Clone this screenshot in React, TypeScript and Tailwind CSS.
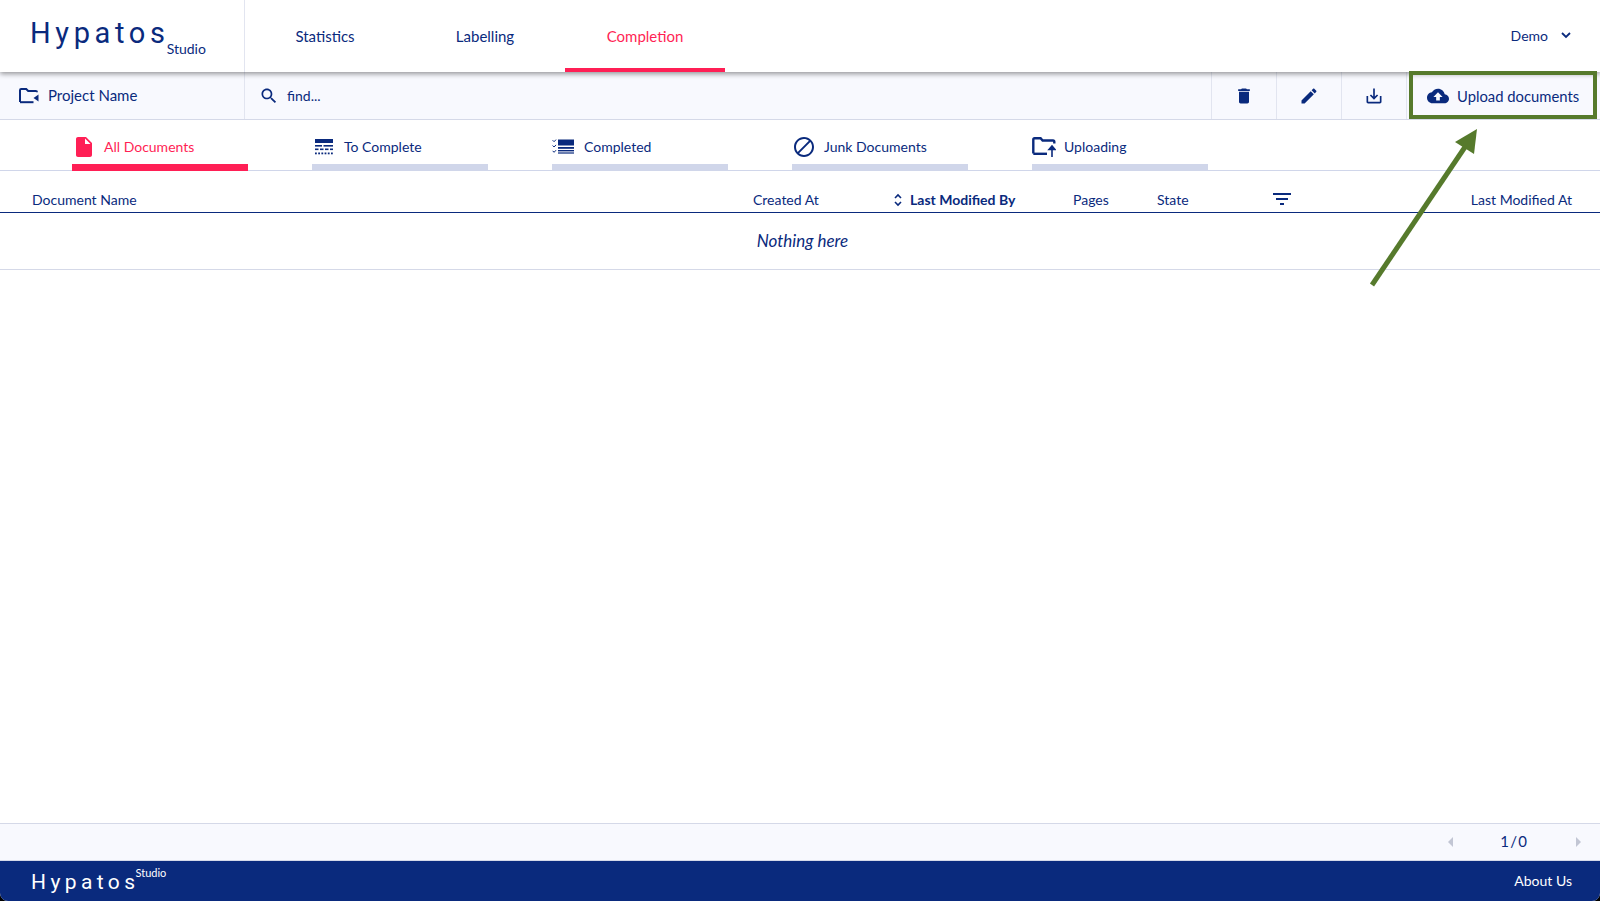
import type { ReactNode } from "react";

const NAVY = "#0a2a7d";

function MatIcon({ d, className }: { d: string; className: string }) {
  return (
    <svg viewBox="0 0 24 24" fill="currentColor" className={className}>
      <path d={d} />
    </svg>
  );
}

function ProjectFolderIcon() {
  return (
    <svg viewBox="0 0 20 16" className="w-[20px] h-[16px]" fill="none">
      <path d="M1 14V2.200C1 1.500 1.500 1 2.200 1h5l2 2h7.600c.7 0 1.200.5 1.200 1.200" stroke={NAVY} strokeWidth="2" />
      <path d="M1 14.200h13.500" stroke={NAVY} strokeWidth="2" />
      <path d="M19.500 6.500v7l-5-3.500z" fill={NAVY} />
    </svg>
  );
}

function UploadFolderIcon() {
  return (
    <svg viewBox="0 0 24 20" className="w-[24px] h-[20px]" fill="none">
      <path d="M1.300 16.500V2.500c0-.8.5-1.300 1.300-1.300h6l2 2.300h10.400c.8 0 1.300.5 1.300 1.300v1.700" stroke={NAVY} strokeWidth="2.400" />
      <path d="M1.300 16.800H15" stroke={NAVY} strokeWidth="2.400" />
      <path d="M20 20v-8M17 12.500l3-3.500 3 3.500z" stroke={NAVY} strokeWidth="1.600" fill={NAVY} />
    </svg>
  );
}

function ToCompleteIcon() {
  return (
    <svg viewBox="0 0 18 16" className="w-[18px] h-[16px]" fill={NAVY}>
      <rect x="0" y="0" width="18" height="4" />
      <rect x="0" y="6" width="7" height="1.600" />
      <rect x="8.500" y="6" width="9.500" height="1.600" />
      <rect x="0" y="9.500" width="3.500" height="1.600" />
      <rect x="5" y="9.500" width="3.500" height="1.600" />
      <rect x="10" y="9.500" width="3.500" height="1.600" />
      <rect x="15" y="9.500" width="3" height="1.600" />
      <rect x="0" y="13.500" width="1.800" height="1.800" />
      <rect x="3.200" y="13.500" width="1.800" height="1.800" />
      <rect x="6.400" y="13.500" width="1.800" height="1.800" />
      <rect x="9.600" y="13.500" width="1.800" height="1.800" />
      <rect x="12.800" y="13.500" width="1.800" height="1.800" />
      <rect x="16" y="13.500" width="1.800" height="1.800" />
    </svg>
  );
}

function CompletedIcon() {
  return (
    <svg viewBox="0 0 22 15" className="w-[22px] h-[15px]" fill="none">
      <path d="M.6 1.200l1.500 1.500L4 .6M.6 6.500L2.100 8 4 5.900M.6 11.800l1.500 1.500 1.900-2.100" stroke={NAVY} strokeWidth="1" />
      <rect x="6" y="0.500" width="16" height="6" fill={NAVY} />
      <rect x="6" y="8" width="16" height="1.800" fill={NAVY} />
      <rect x="6" y="11" width="16" height="1.400" fill={NAVY} />
      <rect x="6" y="13.400" width="16" height="1.200" fill={NAVY} />
    </svg>
  );
}

function DocTab({ icon, label, active, iconBox }: { icon: ReactNode; label: string; active?: boolean; iconBox?: string }) {
  return (
    <div className={`w-[176px] h-[51px] flex flex-col ${active ? "text-[#ff1f55]" : "text-[#0a2a7d]"}`}>
      <div className="h-[44px] flex items-center pt-[9px]">
        <div className={`w-[32px] flex items-center justify-start shrink-0 ${iconBox ?? ""}`}>{icon}</div>
        <span className="text-[14px] leading-none">{label}</span>
      </div>
      <div className={`h-[7px] ${active ? "bg-[#ff1f55]" : "bg-[#d0d6ea]"}`} />
    </div>
  );
}

function ToolButton({ children }: { children: ReactNode }) {
  return <div className="w-[65px] h-full flex items-center justify-center border-l border-[#e2e5f0]">{children}</div>;
}

export default function App() {
  return (
    <div className="relative h-[901px] bg-black overflow-hidden font-['Lato',sans-serif] text-[#0a2a7d]">
      <div className="h-full flex flex-col bg-white rounded-b-[8px] overflow-hidden">
        {/* main nav */}
        <header className="relative z-10 h-[72px] shrink-0 flex bg-white shadow-[0_2px_5px_rgba(0,0,0,0.4)]">
          <div className="w-[245px] shrink-0 border-r border-[#e2e5f0] flex items-start pl-[30px] pt-[12px]">
            <span className="font-['Roboto',sans-serif] text-[29px] leading-[42px] tracking-[0.16em]">Hypatos</span>
            <span className="text-[14px] leading-none mt-[30px] -ml-[3px]">Studio</span>
          </div>
          <nav className="flex">
            <div className="w-[160px] flex items-center justify-center text-[15px]">Statistics</div>
            <div className="w-[160px] flex items-center justify-center text-[15px]">Labelling</div>
            <div className="w-[160px] flex items-center justify-center text-[15px] text-[#ff1f55] border-b-4 border-[#ff1f55] pt-[4px]">
              Completion
            </div>
          </nav>
          <div className="ml-auto flex items-center pr-[29px] pb-[2px] text-[14px]">
            <span>Demo</span>
            <svg viewBox="0 0 10 7" className="w-[10px] h-[7px] ml-[13px]" fill="none">
              <path d="M1 1l4 4 4-4" stroke={NAVY} strokeWidth="1.800" />
            </svg>
          </div>
        </header>

        {/* project toolbar */}
        <div className="h-[48px] shrink-0 flex items-center bg-[#f8f9fe] border-b border-[#d5d9e8]">
          <div className="w-[245px] h-full shrink-0 border-r border-[#e2e5f0] flex items-center pl-[19px] gap-[9px]">
            <ProjectFolderIcon />
            <span className="text-[15px]">Project Name</span>
          </div>
          <div className="flex-1 flex items-center pl-[14px] gap-[8px] text-[14px]">
            <MatIcon
              className="w-[20px] h-[20px]"
              d="M15.500 14h-.79l-.28-.27C15.410 12.590 16 11.110 16 9.500 16 5.910 13.090 3 9.500 3S3 5.910 3 9.500 5.910 16 9.500 16c1.610 0 3.090-.59 4.230-1.570l.27.28v.79l5 4.990L20.490 19l-4.990-5zm-6 0C7.010 14 5 11.990 5 9.500S7.010 5 9.500 5 14 7.010 14 9.500 11.990 14 9.500 14z"
            />
            <span>find...</span>
          </div>
          <ToolButton>
            <MatIcon
              className="w-[20px] h-[20px]"
              d="M6 19c0 1.100.9 2 2 2h8c1.100 0 2-.9 2-2V7H6v12zM19 4h-3.500l-1-1h-5l-1 1H5v2h14V4z"
            />
          </ToolButton>
          <ToolButton>
            <MatIcon
              className="w-[20px] h-[20px]"
              d="M3 17.250V21h3.750L17.810 9.940l-3.750-3.750L3 17.250zM20.710 7.040c.39-.39.39-1.020 0-1.410l-2.340-2.340c-.39-.39-1.020-.39-1.410 0l-1.830 1.830 3.750 3.750 1.830-1.830z"
            />
          </ToolButton>
          <ToolButton>
            <MatIcon
              className="w-[20px] h-[20px]"
              d="M19 12v7H5v-7H3v7c0 1.100.9 2 2 2h14c1.100 0 2-.9 2-2v-7h-2zm-6 .670l2.590-2.580L17 11.500l-5 5-5-5 1.410-1.410L11 12.670V3h2z"
            />
          </ToolButton>
          <div className="w-[194px] h-full flex items-center border-l border-[#e2e5f0] pl-[20px]">
            <MatIcon
              className="w-[22px] h-[22px] mr-[8px]"
              d="M19.350 10.040C18.670 6.590 15.640 4 12 4 9.110 4 6.600 5.640 5.350 8.040 2.340 8.360 0 10.910 0 14c0 3.310 2.690 6 6 6h13c2.760 0 5-2.240 5-5 0-2.640-2.050-4.780-4.650-4.960zM14 13v4h-4v-4H7l5-5 5 5h-3z"
            />
            <span className="text-[14.8px] pt-[1px]">Upload documents</span>
          </div>
        </div>

        {/* document tabs */}
        <div className="h-[51px] shrink-0 flex gap-[64px] pl-[72px] border-b border-[#d0d6ea]">
          <DocTab
            active
            label="All Documents"
            icon={
              <MatIcon
                className="w-[24px] h-[24px]"
                d="M6 2c-1.100 0-1.990.9-1.990 2L4 20c0 1.100.89 2 1.990 2H18c1.100 0 2-.9 2-2V8l-6-6H6zm7 7V3.500L18.500 9H13z"
              />
            }
          />
          <DocTab label="To Complete" iconBox="pl-[3px]" icon={<ToCompleteIcon />} />
          <DocTab label="Completed" icon={<CompletedIcon />} />
          <DocTab
            label="Junk Documents"
            icon={
              <MatIcon
                className="w-[24px] h-[24px]"
                d="M12 2C6.480 2 2 6.480 2 12s4.480 10 10 10 10-4.480 10-10S17.520 2 12 2zM4 12c0-4.420 3.580-8 8-8 1.850 0 3.550.63 4.900 1.690L5.690 16.900C4.630 15.550 4 13.850 4 12zm8 8c-1.850 0-3.550-.63-4.900-1.690L18.310 7.100C19.370 8.450 20 10.150 20 12c0 4.420-3.580 8-8 8z"
              />
            }
          />
          <DocTab label="Uploading" icon={<UploadFolderIcon />} />
        </div>

        {/* table head */}
        <div className="h-[42px] shrink-0 flex items-center pl-[32px] pr-[28px] pt-[16px] border-b-[1.5px] border-[#0a2a7d] text-[14px]">
          <div className="w-[721px]">Document Name</div>
          <div className="w-[140px]">Created At</div>
          <div className="w-[180px] flex items-center font-bold">
            <svg viewBox="0 0 10 14" className="w-[10px] h-[14px] mr-[7px]" fill="none">
              <path d="M2 5l3-3 3 3M2 9l3 3 3-3" stroke={NAVY} strokeWidth="1.600" />
            </svg>
            Last Modified By
          </div>
          <div className="w-[84px]">Pages</div>
          <div className="w-[116px]">State</div>
          <MatIcon
            className="w-[24px] h-[24px] -ml-[3px] -mt-[2px]"
            d="M10 18h4v-2h-4v2zM3 6v2h18V6H3zm3 7h12v-2H6v2z"
          />
          <div className="ml-auto">Last Modified At</div>
        </div>

        {/* empty table row */}
        <div className="h-[57px] shrink-0 flex items-center justify-center pl-[5px] border-b border-[#d5d9e8] italic text-[17px]">
          Nothing here
        </div>

        <div className="flex-1" />

        {/* pager */}
        <div className="h-[38px] shrink-0 flex items-center justify-end bg-[#f8f9fe] border-y border-[#d5d9e8] text-[15px]">
          <span className="w-0 h-0 border-y-[5px] border-y-transparent border-r-[5px] border-r-[#c2c6d4]" />
          <span className="ml-[47px] mr-[49px] -mt-[1px] [word-spacing:-2.5px]">1 / 0</span>
          <span className="w-0 h-0 border-y-[5px] border-y-transparent border-l-[5px] border-l-[#c2c6d4] mr-[19px]" />
        </div>

        {/* footer */}
        <footer className="h-[40px] shrink-0 flex items-center bg-[#0a2a7d] text-white pl-[31px] pr-[28px]">
          <span className="font-['Roboto',sans-serif] text-[21px] leading-none tracking-[0.21em] mt-[2px]">Hypatos</span>
          <span className="text-[11px] leading-none -mt-[17px] -ml-[4px]">Studio</span>
          <span className="ml-auto text-[14px] -mt-[2px]">About Us</span>
        </footer>
      </div>

      {/* green annotation over the upload button */}
      <div className="absolute z-20 left-[1409px] top-[71px] w-[188px] h-[48px] border-[4px] border-[#567a2c]" />
      <svg viewBox="0 0 1600 901" className="absolute z-20 inset-0 w-[1600px] h-[901px] pointer-events-none">
        <line x1="1372" y1="285" x2="1465" y2="147" stroke="#567a2c" strokeWidth="5" />
        <polygon points="1477,129 1455,142 1474,154" fill="#567a2c" />
      </svg>
    </div>
  );
}
